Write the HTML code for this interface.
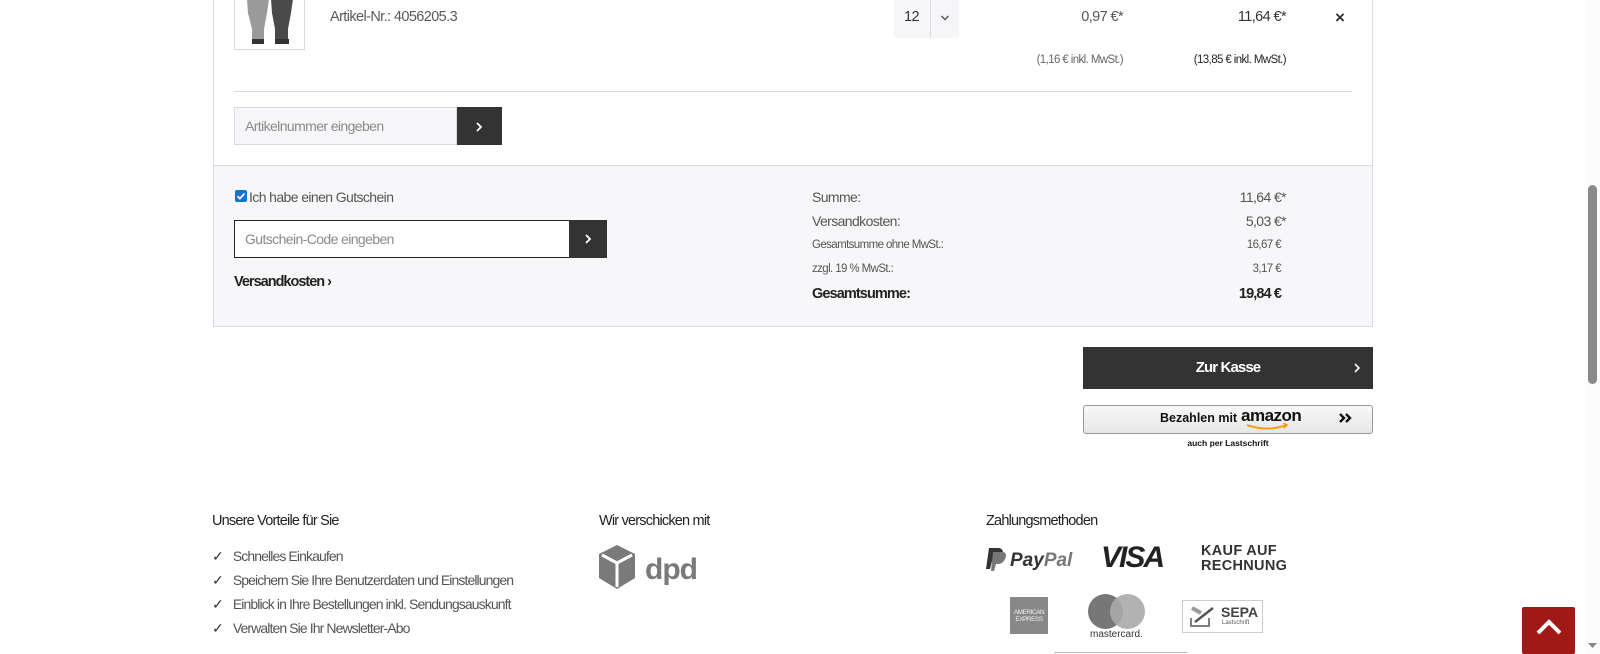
<!DOCTYPE html>
<html><head><meta charset="utf-8"><style>
*{margin:0;padding:0;box-sizing:border-box}
body{width:1600px;height:654px;overflow:hidden;background:#fff;font-family:"Liberation Sans",sans-serif;color:#4a4a4a;position:relative;letter-spacing:-0.6px}
.a{position:absolute;white-space:nowrap}
.r{text-align:right}
</style></head><body>
<div class="a" style="left:213px;top:0;width:1px;height:165px;background:#dadae5"></div>
<div class="a" style="left:1372px;top:0;width:1px;height:165px;background:#dadae5"></div>
<div class="a" style="left:234px;top:-2px;width:71px;height:52px;border:1px solid #dadae5;background:#fff;overflow:hidden">
<svg width="71" height="52" viewBox="0 0 71 52"><path d="M12 0h22l-2 14-3 16v14H17V30L13 14z" fill="#9a9a9a"/><path d="M36 0h22l-2 14-3 16v14H40V30l-3-16z" fill="#4a4a4a"/><rect x="17" y="40" width="12" height="5" fill="#333"/><rect x="40" y="40" width="14" height="5" fill="#333"/></svg></div>
<div class="a" style="left:330px;top:9px;font-size:14.5px;color:#5a5a5a">Artikel-Nr.: 4056205.3</div>
<div class="a" style="left:894px;top:0;width:65px;height:38px;background:#f6f6f9;border-radius:0 0 3px 3px"></div>
<div class="a" style="left:930px;top:0;width:1px;height:38px;background:#dadae5"></div>
<div class="a" style="left:904px;top:9px;font-size:14.5px;color:#333">12</div>
<svg class="a" style="left:940px;top:14px" width="10" height="8"><path d="M1.5 2l3.5 3.5L8.5 2" stroke="#555" stroke-width="1.4" fill="none"/></svg>
<div class="a r" style="right:477px;top:9px;font-size:14.5px;color:#555">0,97 €*</div>
<div class="a r" style="right:314px;top:9px;font-size:14.5px;color:#333">11,64 €*</div>
<div class="a" style="left:1335px;top:8px;font-size:17px;color:#333;font-weight:bold">×</div>
<div class="a r" style="right:477px;top:54px;font-size:11.5px;color:#666">(1,16 € inkl. MwSt.)</div>
<div class="a r" style="right:314px;top:54px;font-size:11.5px;color:#222">(13,85 € inkl. MwSt.)</div>
<div class="a" style="left:234px;top:91px;width:1118px;height:1px;background:#dadae5"></div>
<div class="a" style="left:234px;top:107px;width:223px;height:38px;background:#f6f6f9;border:1px solid #dadae5"></div>
<div class="a" style="left:245px;top:118px;font-size:14px;color:#8a8a8a">Artikelnummer eingeben</div>
<div class="a" style="left:457px;top:107px;width:45px;height:38px;background:#333"></div>
<svg class="a" style="left:474px;top:121px" width="10" height="12"><path d="M3 2l4 4-4 4" stroke="#fff" stroke-width="1.8" fill="none"/></svg>
<div class="a" style="left:213px;top:165px;width:1160px;height:162px;background:#f7f7f9;border:1px solid #dadae5"></div>
<div class="a" style="left:235px;top:190px;width:12px;height:12px;background:#0a74da;border-radius:2px"></div>
<svg class="a" style="left:235px;top:190px" width="12" height="12"><path d="M2.5 6.2l2.4 2.4L9.5 3.5" stroke="#fff" stroke-width="1.8" fill="none"/></svg>
<div class="a" style="left:249px;top:189px;font-size:14px;color:#555">Ich habe einen Gutschein</div>
<div class="a" style="left:234px;top:220px;width:336px;height:38px;background:#fff;border:1px solid #222"></div>
<div class="a" style="left:245px;top:231px;font-size:14px;color:#8a8a8a">Gutschein-Code eingeben</div>
<div class="a" style="left:569px;top:220px;width:38px;height:38px;background:#333"></div>
<svg class="a" style="left:583px;top:233px" width="10" height="12"><path d="M3 2l4 4-4 4" stroke="#fff" stroke-width="1.8" fill="none"/></svg>
<div class="a" style="left:234px;top:274px;font-size:14.5px;color:#222;font-weight:bold;letter-spacing:-1px">Versandkosten ›</div>
<div class="a" style="left:812px;top:189px;font-size:14px;color:#555">Summe:</div>
<div class="a r" style="right:314px;top:189px;font-size:14px;color:#555">11,64 €*</div>
<div class="a" style="left:812px;top:213px;font-size:14px;color:#555">Versandkosten:</div>
<div class="a r" style="right:314px;top:213px;font-size:14px;color:#555">5,03 €*</div>
<div class="a" style="left:812px;top:239px;font-size:11.5px;color:#555">Gesamtsumme ohne MwSt.:</div>
<div class="a r" style="right:319px;top:239px;font-size:11.5px;color:#555">16,67 €</div>
<div class="a" style="left:812px;top:263px;font-size:11.5px;color:#555">zzgl. 19 % MwSt.:</div>
<div class="a r" style="right:319px;top:263px;font-size:11.5px;color:#555">3,17 €</div>
<div class="a" style="left:812px;top:286px;font-size:14.5px;color:#222;font-weight:bold;letter-spacing:-0.9px">Gesamtsumme:</div>
<div class="a r" style="right:319px;top:286px;font-size:14.5px;color:#222;font-weight:bold;letter-spacing:-0.9px">19,84 €</div>
<div class="a" style="left:1083px;top:347px;width:290px;height:42px;background:#333"></div>
<div class="a" style="left:1083px;top:359px;width:290px;text-align:center;font-size:15px;color:#fff;font-weight:bold;letter-spacing:-0.9px">Zur Kasse</div>
<svg class="a" style="left:1352px;top:362px" width="10" height="12"><path d="M3 2l4 4-4 4" stroke="#fff" stroke-width="1.6" fill="none"/></svg>
<div class="a" style="left:1083px;top:405px;width:290px;height:29px;border:1px solid #999;border-radius:3px;background:linear-gradient(#f8f8f8,#e6e6e6)"></div>
<div class="a" style="left:1160px;top:411px;font-size:12.5px;color:#111;font-weight:bold;letter-spacing:0">Bezahlen mit</div>
<div class="a" style="left:1241px;top:406px;font-size:17px;color:#111;font-weight:bold;letter-spacing:-0.5px">amazon</div>
<svg class="a" style="left:1245px;top:423px" width="50" height="8"><path d="M2 2q20 7 40 0" stroke="#f90" stroke-width="1.8" fill="none"/><path d="M38 0l4 2-3 3" stroke="#f90" stroke-width="1.5" fill="none"/></svg>
<svg class="a" style="left:1338px;top:412px" width="16" height="12"><path d="M2 2l4 4-4 4M8 2l4 4-4 4" stroke="#111" stroke-width="2.4" fill="none"/></svg>
<div class="a" style="left:1083px;top:438px;width:290px;text-align:center;font-size:8.5px;color:#111;font-weight:bold;letter-spacing:0">auch per Lastschrift</div>
<div class="a" style="left:212px;top:513px;font-size:14.5px;color:#222;letter-spacing:-0.8px">Unsere Vorteile für Sie</div>
<div class="a" style="left:599px;top:513px;font-size:14.5px;color:#222;letter-spacing:-0.8px">Wir verschicken mit</div>
<div class="a" style="left:986px;top:513px;font-size:14.5px;color:#222;letter-spacing:-0.8px">Zahlungsmethoden</div>
<div class="a" style="left:212px;top:545px;font-size:14px;color:#555;line-height:23.9px;letter-spacing:-0.9px">
<div><span style="color:#333;margin-right:10px">✓</span>Schnelles Einkaufen</div>
<div><span style="color:#333;margin-right:10px">✓</span>Speichern Sie Ihre Benutzerdaten und Einstellungen</div>
<div><span style="color:#333;margin-right:10px">✓</span>Einblick in Ihre Bestellungen inkl. Sendungsauskunft</div>
<div><span style="color:#333;margin-right:10px">✓</span>Verwalten Sie Ihr Newsletter-Abo</div></div>
<svg class="a" style="left:599px;top:544px" width="105" height="48" viewBox="0 0 105 48"><path d="M18 1L36 10v24L18 45 0 34V10z" fill="#7a7a7a"/><path d="M3 11l15 8 15-8M18 19v24" stroke="#fff" stroke-width="3" fill="none"/><text x="46" y="35" font-family="Liberation Sans" font-weight="bold" font-size="30" fill="#7a7a7a" letter-spacing="-1">dpd</text></svg>
<svg class="a" style="left:986px;top:544px" width="100" height="30"><path d="M3 4h9c5 0 6 4 4 8s-5 5-9 5H6l-2 8H0z" fill="#333"/><path d="M7 8h9c4 0 5 3 3 7s-4 5-8 5h-1l-2 7H5z" fill="#777"/><text x="24" y="22" font-family="Liberation Sans" font-weight="bold" font-style="italic" font-size="19" fill="#333" letter-spacing="0">Pay<tspan fill="#777">Pal</tspan></text></svg>
<div class="a" style="left:1101px;top:541px;font-size:30px;font-weight:bold;font-style:italic;color:#222;letter-spacing:-2px">VISA</div>
<div class="a" style="left:1201px;top:544px;font-size:14.5px;font-weight:bold;color:#333;line-height:15px;letter-spacing:0.3px">KAUF AUF<br>RECHNUNG</div>
<div class="a" style="left:1010px;top:597px;width:38px;height:37px;background:#888"><div style="font-size:6.5px;color:#eee;text-align:center;margin-top:12px;line-height:7px;letter-spacing:-0.5px">AMERICAN<br>EXPRESS</div></div>
<div class="a" style="left:1088px;top:594px;width:35px;height:35px;border-radius:50%;background:#777"></div>
<div class="a" style="left:1110px;top:594px;width:35px;height:35px;border-radius:50%;background:#aaa;opacity:0.9"></div>
<div class="a" style="left:1090px;top:629px;font-size:10px;color:#333;letter-spacing:0">mastercard.</div>
<div class="a" style="left:1182px;top:600px;width:81px;height:33px;border:1px solid #ccc;background:#fff"></div>
<svg class="a" style="left:1188px;top:604px" width="30" height="26"><path d="M3 14v8h18v-8" stroke="#555" stroke-width="1.5" fill="none"/><path d="M7 18l18-14" stroke="#555" stroke-width="2.5"/><path d="M4 4l9 5" stroke="#999" stroke-width="4"/></svg>
<div class="a" style="left:1221px;top:604px;font-size:14px;font-weight:bold;color:#444;letter-spacing:0">SEPA</div>
<div class="a" style="left:1222px;top:620px;font-size:6px;color:#555;letter-spacing:0">Lastschrift</div>
<div class="a" style="left:1054px;top:652px;width:133px;height:1px;background:#bbb"></div>
<div class="a" style="left:1522px;top:607px;width:53px;height:47px;background:#a01916;border-radius:2px"></div>
<svg class="a" style="left:1535px;top:617px" width="28" height="22"><path d="M3 16L14 5l11 11" stroke="#fff" stroke-width="4" fill="none"/></svg>
<div class="a" style="left:1585px;top:0;width:15px;height:654px;background:#fbfbfb"></div>
<div class="a" style="left:1588px;top:185px;width:9px;height:199px;background:#8a8a8a;border-radius:5px"></div>
<svg class="a" style="left:1588px;top:643px" width="10" height="6"><path d="M0 0h9l-4.5 5z" fill="#888"/></svg>
</body></html>
